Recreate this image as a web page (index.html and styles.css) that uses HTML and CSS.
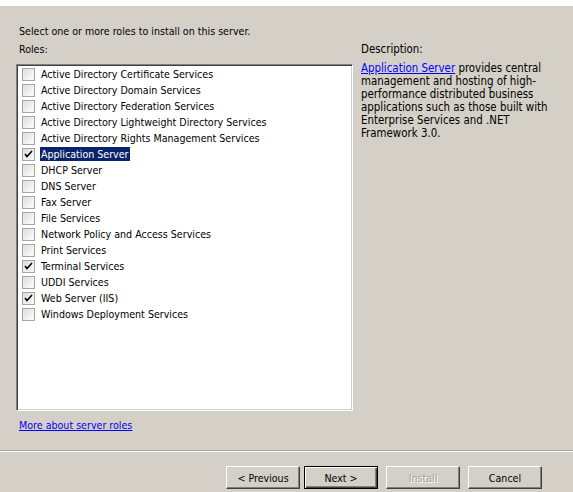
FILE: index.html
```html
<!DOCTYPE html>
<html>
<head>
<meta charset="utf-8">
<link rel="stylesheet" href="styles.css">
</head>
<body>
<div class="page">
  <div class="topstrip"></div>
  <div class="main">
    <div class="intro">Select one or more roles to install on this server.</div>
    <div class="cols">
      <div class="leftcol">
        <div class="label">Roles:</div>
        <div class="listbox">
          <div class="row"><span class="cb"></span><span class="txt">Active Directory Certificate Services</span></div>
          <div class="row"><span class="cb"></span><span class="txt">Active Directory Domain Services</span></div>
          <div class="row"><span class="cb"></span><span class="txt">Active Directory Federation Services</span></div>
          <div class="row"><span class="cb"></span><span class="txt">Active Directory Lightweight Directory Services</span></div>
          <div class="row"><span class="cb"></span><span class="txt">Active Directory Rights Management Services</span></div>
          <div class="row"><span class="cb checked"><svg viewBox="0 0 13 13" width="13" height="13"><path d="M3 6 L5 8.5 L10 3" fill="none" stroke="#000" stroke-width="1.6"/></svg></span><span class="txt selected">Application Server</span></div>
          <div class="row"><span class="cb"></span><span class="txt">DHCP Server</span></div>
          <div class="row"><span class="cb"></span><span class="txt">DNS Server</span></div>
          <div class="row"><span class="cb"></span><span class="txt">Fax Server</span></div>
          <div class="row"><span class="cb"></span><span class="txt">File Services</span></div>
          <div class="row"><span class="cb"></span><span class="txt">Network Policy and Access Services</span></div>
          <div class="row"><span class="cb"></span><span class="txt">Print Services</span></div>
          <div class="row"><span class="cb checked"><svg viewBox="0 0 13 13" width="13" height="13"><path d="M3 6 L5 8.5 L10 3" fill="none" stroke="#000" stroke-width="1.6"/></svg></span><span class="txt">Terminal Services</span></div>
          <div class="row"><span class="cb"></span><span class="txt">UDDI Services</span></div>
          <div class="row"><span class="cb checked"><svg viewBox="0 0 13 13" width="13" height="13"><path d="M3 6 L5 8.5 L10 3" fill="none" stroke="#000" stroke-width="1.6"/></svg></span><span class="txt">Web Server (IIS)</span></div>
          <div class="row"><span class="cb"></span><span class="txt">Windows Deployment Services</span></div>
        </div>
        <a class="link more" href="#">More about server roles</a>
      </div>
      <div class="rightcol">
        <div class="label dlabel">Description:</div>
        <div class="desc"><a class="link" href="#">Application Server</a> provides central<br>management and hosting of high-<br>performance distributed business<br>applications such as those built with<br>Enterprise Services and .NET<br>Framework 3.0.</div>
      </div>
    </div>
  </div>
  <div class="separator"></div>
  <div class="buttons">
    <button class="btn">&lt; Previous</button>
    <button class="btn default">Next &gt;</button>
    <button class="btn disabled">Install</button>
    <button class="btn">Cancel</button>
  </div>
</div>
</body>
</html>
```
FILE: styles.css
```css
html, body {
  margin: 0;
  padding: 0;
}
body {
  width: 573px;
  height: 492px;
  overflow: hidden;
  background: #d4d0c8;
  font-family: "DejaVu Sans Condensed", "DejaVu Sans", sans-serif;
  font-size: 10.6px;
  color: #000;
}
.page {
  display: flex;
  flex-direction: column;
  height: 492px;
}
.topstrip {
  height: 6px;
  background: #fff;
}
.main {
  padding-left: 16px;
  flex: 1;
}
.intro {
  margin-top: 19px;
  padding-left: 3px;
  line-height: 13px;
}
.cols {
  display: flex;
  margin-top: 5px;
}
.leftcol {
  width: 337px;
  display: flex;
  flex-direction: column;
}
.label {
  line-height: 13px;
  padding-left: 3px;
}
.rightcol {
  margin-left: 8px;
  font-size: 11.4px;
}
.rightcol .label {
  padding-left: 0;
}
.listbox {
  margin-top: 8px;
  height: 344px;
  background: #fff;
  border-top: 1px solid #808080;
  border-left: 1px solid #808080;
  border-right: 1px solid #fff;
  border-bottom: 1px solid #fff;
  box-shadow: inset 1px 1px 0 #404040, inset -1px -1px 0 #d4d0c8;
  padding: 1px 0 0 4px;
}
.row {
  height: 16px;
  display: flex;
  align-items: center;
}
.cb {
  width: 11px;
  height: 11px;
  border: 1px solid #a7a6aa;
  background: linear-gradient(135deg, #dcdbd5 0%, #f2f2ee 60%, #fafaf8 100%);
  margin-left: 1px;
  margin-right: 5px;
  position: relative;
  flex: none;
}
.cb svg {
  position: absolute;
  left: -1px;
  top: -1px;
}
.txt {
  line-height: 14px;
  padding: 0 1px;
}
.txt.selected {
  background: #0a246a;
  color: #fff;
}
.link {
  color: #0000ff;
  text-decoration: underline;
}
.more {
  margin-top: 8px;
  padding-left: 3px;
  line-height: 13px;
  align-self: flex-start;
}
.desc {
  margin-top: 6px;
  line-height: 13px;
  white-space: nowrap;
}
.separator {
  height: 1px;
  background: #a8a49c;
  border-bottom: 1px solid #fff;
}
.buttons {
  display: flex;
  justify-content: flex-end;
  padding-right: 31px;
  margin-top: 14px;
  margin-bottom: 3px;
}
.btn {
  width: 74px;
  height: 23px;
  margin-left: 8px;
  padding: 0;
  font-family: inherit;
  font-size: inherit;
  color: #000;
  background: #d4d0c8;
  border-top: 1px solid #fff;
  border-left: 1px solid #fff;
  border-right: 1px solid #404040;
  border-bottom: 1px solid #404040;
  box-shadow: inset -1px -1px 0 #808080;
}
.btn.default {
  margin-left: 4px;
  border: 1px solid #000;
  box-shadow: inset 1px 1px 0 #fff, inset -1px -1px 0 #404040, inset -2px -2px 0 #808080;
}
.btn.disabled {
  color: #a0a0a0;
  text-shadow: 1px 1px 0 #fff;
}
```
